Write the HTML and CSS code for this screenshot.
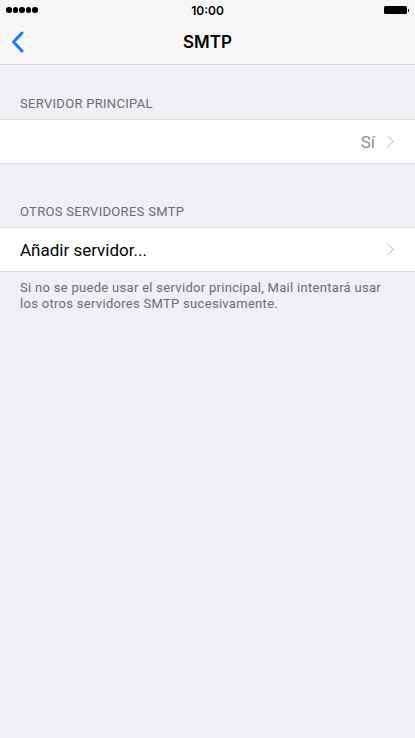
FILE: index.html
```html
<!DOCTYPE html>
<html lang="es">
<head>
  <meta charset="UTF-8" />
  <meta name="viewport" content="width=device-width, initial-scale=1" />
  <title>SMTP</title>
  <link rel="stylesheet" href="styles.css">
</head>
<body>
  <div class="statusbar">
    <div class="signal">
      <span></span><span></span><span></span><span></span><span></span>
    </div>
    <div class="time">10:00</div>
    <div class="battery"><div class="battery-body"></div><div class="battery-tip"></div></div>
  </div>

  <div class="navbar">
    <a class="back" href="#">
      <svg width="13" height="22" viewBox="0 0 13 22">
        <path d="M11 2 L2.5 11 L11 20" fill="none" stroke="#157efb" stroke-width="3" stroke-linecap="round" stroke-linejoin="round"/>
      </svg>
    </a>
    <h1>SMTP</h1>
  </div>

  <div class="section first">
    <div class="section-header">SERVIDOR PRINCIPAL</div>
    <div class="group">
      <div class="cell">
        <span class="cell-label"></span>
        <span class="cell-value">Sí</span>
        <span class="chevron"></span>
      </div>
    </div>
  </div>

  <div class="section">
    <div class="section-header">OTROS SERVIDORES SMTP</div>
    <div class="group">
      <div class="cell">
        <span class="cell-label">Añadir servidor...</span>
        <span class="chevron"></span>
      </div>
    </div>
    <div class="section-footer">Si no se puede usar el servidor principal, Mail intentará usar los otros servidores SMTP sucesivamente.</div>
  </div>
</body>
</html>
```

FILE: styles.css
```css
body {
  margin: 0;
  background: #efeff4;
  font-family: Roboto, "Liberation Sans", sans-serif;
  color: #000;
  min-height: 738px;
}
.statusbar {
  height: 20px;
  background: #f7f7f7;
  display: flex;
  align-items: center;
  justify-content: space-between;
  padding: 0 6px;
  position: relative;
}
.signal {
  display: flex;
  gap: 1px;
}
.signal span {
  width: 5.5px;
  height: 5.5px;
  border-radius: 50%;
  background: #000;
}
.time {
  position: absolute;
  left: 0;
  right: 0;
  text-align: center;
  font-family: Inter, sans-serif;
  font-size: 12px;
  font-weight: 600;
}
.battery {
  display: flex;
  align-items: center;
}
.battery-body {
  width: 23px;
  height: 8px;
  background: #000;
  border-radius: 1.5px;
}
.battery-tip {
  width: 1.5px;
  height: 3px;
  background: #000;
  margin-left: 1px;
}
.navbar {
  height: 44px;
  background: #f7f7f7;
  border-bottom: 1px solid #d6d6da;
  display: flex;
  align-items: center;
  justify-content: center;
  position: relative;
}
.navbar h1 {
  margin: 0;
  font-family: Inter, sans-serif;
  font-size: 17px;
  font-weight: 600;
}
.back {
  position: absolute;
  left: 11px;
  top: 11px;
  display: flex;
}
.section-header {
  padding: 31px 20px 7px;
  font-size: 13px;
  line-height: 16px;
  letter-spacing: 0.3px;
  color: #6d6d72;
}
.section + .section .section-header {
  padding-top: 40px;
}
.group {
  background: #fff;
  border-top: 1px solid #dcdce0;
  border-bottom: 1px solid #dcdce0;
}
.cell {
  height: 43px;
  display: flex;
  align-items: center;
  padding: 0 20px;
  font-size: 17px;
}
.cell-label {
  flex: 1;
}
.cell-value {
  color: #8e8e93;
  margin-right: 8px;
}
.chevron {
  width: 8px;
  height: 8px;
  border-right: 1.5px solid #c7c7cc;
  border-top: 1.5px solid #c7c7cc;
  transform: rotate(45deg);
  margin-right: 3px;
}
.section-footer {
  padding: 8px 20px;
  font-size: 13px;
  line-height: 16px;
  letter-spacing: 0.3px;
  color: #6d6d72;
}
```
